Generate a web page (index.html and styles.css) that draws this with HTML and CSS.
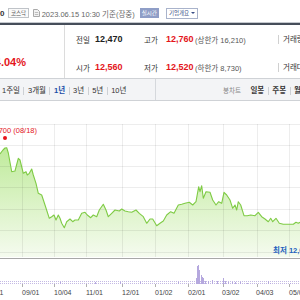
FILE: index.html
```html
<!DOCTYPE html>
<html lang="ko">
<head>
<meta charset="UTF-8">
<title>종목 시세 차트</title>
<link rel="stylesheet" href="styles.css">
</head>
<body>
<div class="page">

  <!-- 상단 종목 정보 -->
  <div class="top">
    <span class="code">0</span>
    <span class="mkt">코스닥</span>
    <svg class="ico-doc" width="7" height="8" viewBox="0 0 7 8"><path d="M.5.5h4l2 2v5h-6z" fill="#f2f2f2" stroke="#a9a9a9"/><path d="M1.8 3.5h3.4M1.8 5.5h3.4" stroke="#bdbdbd"/></svg>
    <span class="date">2023.06.15 10:30 기준(장중)</span>
    <span class="live">실시간</span>
    <span class="corp">기업개요 <i></i></span>
  </div>

  <!-- 시세 -->
  <div class="info">
    <div class="now"><span class="chg">▲500 +4.04%</span></div>
    <dl class="rate">
      <dt>전일</dt><dd>12,470</dd>
      <dt>고가</dt><dd class="up">12,760</dd><dd class="sub">(상한가 16,210)</dd><dt class="sep">거래량</dt>
      <dt>시가</dt><dd class="up">12,560</dd>
      <dt>저가</dt><dd class="up">12,520</dd><dd class="sub">(하한가 8,730)</dd><dt class="sep">거래대금</dt>
    </dl>
  </div>

  <!-- 기간 / 차트 종류 -->
  <div class="tabs">
    <ul class="period">
      <li>1주일</li><li>3개월</li><li class="on">1년</li><li>3년</li><li>5년</li><li>10년</li>
    </ul>
    <ul class="kind">
      <li class="lbl">봉차트</li><li>일봉</li><li>주봉</li><li>월봉</li>
    </ul>
  </div>

  <!-- 차트 -->
  <svg class="chart" width="300" height="199" viewBox="0 101 300 199">
    <defs>
      <linearGradient id="fill" x1="0" y1="124" x2="0" y2="257" gradientUnits="userSpaceOnUse">
        <stop offset="0" stop-color="#b4e789"/>
        <stop offset="1" stop-color="#f5fbef"/>
      </linearGradient>
      <pattern id="tiny" width="2" height="3" patternUnits="userSpaceOnUse">
        <rect x="0" y="1" width="1" height="2" fill="#c4b9e4"/>
      </pattern>
    </defs>

    <path class="area" d="M0 154L3 150L5 148L6.7 147.7L8.3 153L11.7 171.7L15 171L18.3 158.3L20 160L23.3 173.3L26 171.7L27.3 175L29.3 173.3L31.7 169L33.3 175L36 183.3L38.3 193.3L41.7 195L45 205L49.3 218.3L51.7 216.7L54 215L56 220L58.3 215L60 218.3L61.7 223.3L64.3 227.7L66.7 221.7L70 219L72.7 221.7L75 220L78.3 220L81.7 213.3L85 212.3L87.3 215L90.7 217.7L93.3 215L96.7 216.7L99.3 210L103.3 204.3L106 210L108.3 216.7L111.7 213.3L115 210L119.3 211L121.7 209L125 211L128.3 211.7L131.7 212.3L136 210L139.3 213.3L143.3 216.7L146.7 223.3L150 219L152.7 219L156.7 225.7L160 223.3L163.3 221L166.7 215L170.7 211.7L174 213.3L178.3 205L181.7 204.3L185 203.3L189.3 202.3L192.7 205L196 201.7L198.7 186.7L200 191.7L201.7 185.7L203.3 198.3L206 191.7L210 192.3L212.7 200L216 205L218.7 201.7L221.7 203.3L224 192.3L226.7 195L230 200L232.7 208.3L235 205L236.7 210L238.3 201.7L240.7 205L244 215.7L247.3 215.7L250.7 215L255 215.7L258.3 212.3L261.7 216.7L265 219L268.3 221.7L270.7 218.3L272.7 221.7L276 218.3L279.3 223.3L283.3 224.3L290 224.3L293.3 224.3L296 222.3L298.3 223.3L300 222.3V257H0Z"/>

    <g class="grid">
      <path d="M0 124.5H300M0 145.5H300M0 166.5H300M0 187.5H300M0 209.5H300M0 230.5H300M0 252.5H300"/>
      <path d="M22.5 124V257M54.5 124V257M86.5 124V257M122.5 124V257M155.5 124V257M188.5 124V257M223.5 124V257M257.5 124V257M289.5 124V257"/>
    </g>

    <polyline class="line" points="0,154 3,150 5,148 6.7,147.7 8.3,153 11.7,171.7 15,171 18.3,158.3 20,160 23.3,173.3 26,171.7 27.3,175 29.3,173.3 31.7,169 33.3,175 36,183.3 38.3,193.3 41.7,195 45,205 49.3,218.3 51.7,216.7 54,215 56,220 58.3,215 60,218.3 61.7,223.3 64.3,227.7 66.7,221.7 70,219 72.7,221.7 75,220 78.3,220 81.7,213.3 85,212.3 87.3,215 90.7,217.7 93.3,215 96.7,216.7 99.3,210 103.3,204.3 106,210 108.3,216.7 111.7,213.3 115,210 119.3,211 121.7,209 125,211 128.3,211.7 131.7,212.3 136,210 139.3,213.3 143.3,216.7 146.7,223.3 150,219 152.7,219 156.7,225.7 160,223.3 163.3,221 166.7,215 170.7,211.7 174,213.3 178.3,205 181.7,204.3 185,203.3 189.3,202.3 192.7,205 196,201.7 198.7,186.7 200,191.7 201.7,185.7 203.3,198.3 206,191.7 210,192.3 212.7,200 216,205 218.7,201.7 221.7,203.3 224,192.3 226.7,195 230,200 232.7,208.3 235,205 236.7,210 238.3,201.7 240.7,205 244,215.7 247.3,215.7 250.7,215 255,215.7 258.3,212.3 261.7,216.7 265,219 268.3,221.7 270.7,218.3 272.7,221.7 276,218.3 279.3,223.3 283.3,224.3 290,224.3 293.3,224.3 296,222.3 298.3,223.3 300,222.3"/>

    <text class="hi" x="37" y="133" text-anchor="end">최고 21,700 (08/18)</text>
    <circle class="hi-dot" cx="5" cy="138" r="2"/>
    <text class="lo" x="273" y="253">최저 12,010 (05/31)</text>

    <line class="divide" x1="0" y1="258.5" x2="300" y2="258.5"/>

    <!-- 거래량 -->
    <rect x="0" y="281" width="300" height="3" fill="url(#tiny)"/>
    <path class="vol" d="M178.5 284V282M196.5 284V278M197.5 284V266M198.5 284V265M199.5 284V270M201.5 284V275M202.5 284V277M203.5 284V278M205.5 284V281M208.5 284V281M212.5 284V280M217.5 284V281M223.5 284V278M225.5 284V281M228.5 284V282M232.5 284V282M235.5 284V282M240.5 284V282M247.5 284V283M268.5 284V281M270.5 284V283M290.5 284V283M60.5 284V282M95.5 284V282M120.5 284V282M140.5 284V282"/>
    <path class="tick" d="M22.5 284V287M54.5 284V287M86.5 284V287M122.5 284V287M155.5 284V287M188.5 284V287M223.5 284V287M257.5 284V287M289.5 284V287"/>

    <g class="axis">
      <text x="-14" y="295">08/01</text>
      <text x="22" y="295">09/01</text>
      <text x="54" y="295">10/04</text>
      <text x="86" y="295">11/01</text>
      <text x="122" y="295">12/01</text>
      <text x="155" y="295">01/02</text>
      <text x="188" y="295">02/01</text>
      <text x="222" y="295">03/02</text>
      <text x="256" y="295">04/03</text>
      <text x="289" y="295">05/02</text>
    </g>
  </svg>

</div>
</body>
</html>
```

FILE: styles.css
```css
*{box-sizing:border-box;margin:0;padding:0}
body{
  font-family:"Liberation Sans","Noto Sans CJK KR",sans-serif;
  color:#222;
  background:#fff;
  width:300px;height:300px;
  overflow:hidden;
}
.page{width:340px}
ul{list-style:none}

/* ---------- 상단 ---------- */
.top{
  display:flex;align-items:center;
  height:25px;padding-top:3px;
  border-bottom:2px solid #464e5a;
  box-shadow:inset 0 -1px 0 #c5c9cf;
  white-space:nowrap;
}
.code{font-size:8px;font-weight:bold;color:#333}
.mkt{
  margin-left:4px;
  font-size:5.5px;line-height:8px;
  padding:0 1.5px;
  border:1px solid #bfc3c8;
  background:#fafafa;color:#555;
}
.ico-doc{margin-left:4px;display:block}
.date{margin-left:2px;font-size:7.5px;color:#666}
.live{
  margin-left:5px;
  font-size:5.5px;line-height:10px;
  padding:0 2px;
  background:#8f9ec7;color:#fff;
}
.corp{
  margin-left:7px;
  display:flex;align-items:center;gap:2px;
  font-size:5.5px;line-height:9px;
  padding:0 2px;
  border:1px solid #a9b3cb;
  color:#3a4f86;
}
.corp i{
  border-left:2px solid transparent;border-right:2px solid transparent;
  border-top:2px solid #3a4f86;
}

/* ---------- 시세 ---------- */
.info{display:flex;height:53px}
.now{
  width:65px;
  border-right:1px solid #dcdcdc;
  display:flex;justify-content:flex-end;align-items:flex-end;
  padding:0 38px 9px 0;
  white-space:nowrap;
}
.chg{color:#e4151b;font-weight:bold;font-size:11px;line-height:14px}
.rate{
  display:grid;
  grid-template-columns:19px 49px 22px 29px 83px auto;
  grid-template-rows:16px 16px;
  row-gap:12px;
  align-items:center;
  padding:6px 0 0 11px;
  font-size:7.5px;
  white-space:nowrap;
}
.rate dt{color:#333}
.rate dd{font-weight:bold;font-size:9px}
.rate dd.up{color:#e4151b}
.rate dd.sub{font-weight:normal;font-size:7.5px;color:#555}
.rate dt.sep{border-left:1px solid #d0d0d0;padding-left:4px;line-height:9px}

/* ---------- 탭 ---------- */
.tabs{
  display:flex;
  height:23px;
  border-top:1px solid #cfd2d6;
  border-bottom:1px solid #cfd2d6;
  background:#f3f4f6;
  font-size:7.5px;
  white-space:nowrap;
}
.tabs ul{display:flex;align-items:center;padding-top:2px}
.tabs li{padding:0 3.5px;line-height:8px;color:#333}
.tabs li+li{border-left:1px solid #cdd0d4}
.period{width:156px;border-right:1px solid #d5d8dc}
.period li:first-child{padding-left:2px}
.period .on{color:#1c4ea8;font-weight:bold}
.kind{padding-left:67px}
.kind li{font-weight:bold}
.kind .lbl{font-size:6.5px;font-weight:normal;color:#888;padding:0;margin-right:6px}
.kind .lbl+li{border-left:0}

/* ---------- 차트 ---------- */
.chart{display:block}
.chart .area{fill:url(#fill)}
.chart .grid path{stroke:rgba(0,0,0,.07);stroke-width:1;fill:none}
.chart .line{fill:none;stroke:#7fcb45;stroke-width:1.1;stroke-linejoin:round}
.chart text{font-family:"Liberation Sans","Noto Sans CJK KR",sans-serif}
.chart .hi{fill:#e4151b;font-size:7.5px}
.chart .hi-dot{fill:#e8141b}
.chart .lo{fill:#2360bd;font-size:7.5px;font-weight:bold}
.chart .divide{stroke:#a8a8a8;stroke-width:1}
.chart .vol{stroke:#b5a8de;stroke-width:1;fill:none}
.chart .tick{stroke:#b0b0b0;stroke-width:1}
.chart .axis text{fill:#444;font-size:7px}
```
